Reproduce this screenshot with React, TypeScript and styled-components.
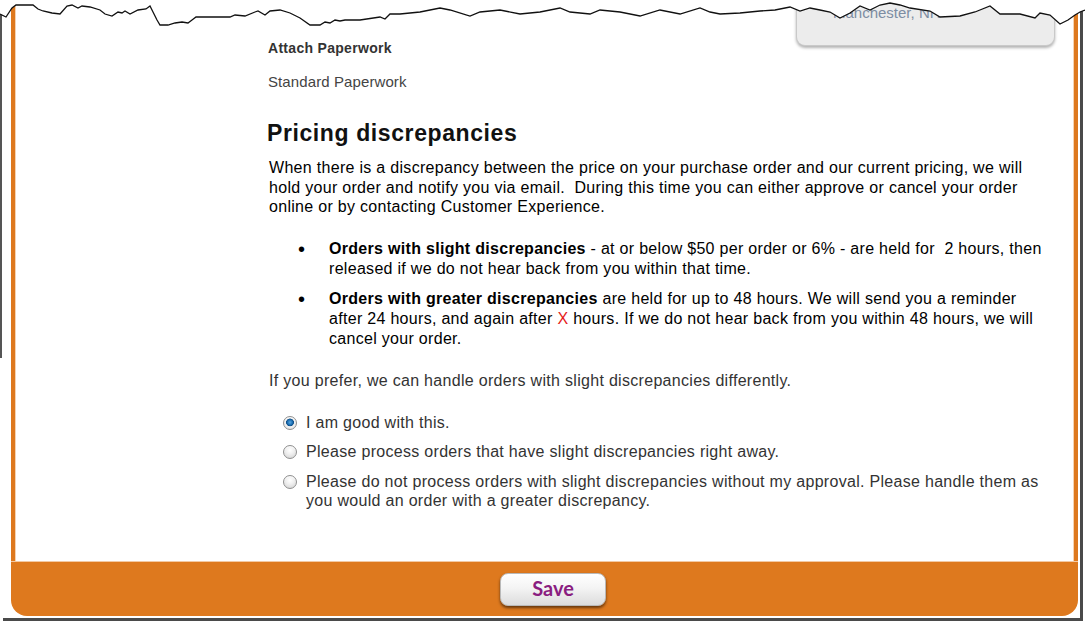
import React from 'react';
import styled, {createGlobalStyle} from 'styled-components';

// ── Global ─────────────────────────────────────────────────────────

const GlobalStyle = createGlobalStyle`
  html, body {
    margin: 0;
    padding: 0;
    background: #ffffff;
  }
  body {
    font-family: 'Liberation Sans', Arial, sans-serif;
    width: 1085px;
    height: 623px;
    overflow: hidden;
  }
`;

const ORANGE = '#de791e';

// ── Sheet & frame ──────────────────────────────────────────────────

const Sheet = styled.div`
  position: relative;
  width: 1080px;
  height: 618px;
  background: #ffffff;
  box-shadow: 3px 3px 0 #4a4a4a;

  &::before {
    content: '';
    position: absolute;
    left: 0;
    top: 0;
    width: 2px;
    height: 358px;
    background: #555;
  }
`;

const Frame = styled.div`
  display: flex;
  flex-direction: column;
  margin-left: 11px;
  width: 1067px;
  height: 616px;
`;

const Body = styled.div`
  flex: 1;
  display: flex;
  flex-direction: column;
  background: #ffffff;
  border-left: 4px solid ${ORANGE};
  border-right: 4px solid ${ORANGE};
  padding: 0 10px 0 253px;
  box-shadow: inset 1px 0 0 #f6d3b2, inset -1px 0 0 #f6d3b2;
`;

const Footer = styled.div`
  height: 55px;
  display: flex;
  align-items: center;
  justify-content: center;
  padding-left: 17px;
  background: ${ORANGE};
  border-radius: 0 0 16px 16px;
  border-top: 1px solid #f3c9a3;
  box-sizing: border-box;
`;

const SaveButton = styled.button`
  width: 106px;
  height: 33px;
  border: 1px solid #b9b9b9;
  border-radius: 8px;
  background: linear-gradient(#ffffff 0%, #f4f4f4 45%, #dcdcdc 100%);
  box-shadow: 0 2px 3px rgba(0, 0, 0, 0.55);
  font-family: Lato, 'Open Sans', sans-serif;
  font-weight: 700;
  font-size: 20px;
  color: #8a1d80;
  cursor: pointer;
  padding: 0 0 2px;
`;

// ── Torn top edge (drawn over the top of the sheet) ────────────────

const TornEdge = styled.svg`
  position: absolute;
  left: 0;
  top: 0;
  width: 1085px;
  height: 32px;
`;

const tornPoints: [number, number][] = [
  [0, 14], [6, 17], [12, 8], [16, 5], [33, 5], [38, 9], [43, 11], [52, 13],
  [60, 14], [67, 6], [72, 5], [78, 8], [82, 6], [90, 7], [100, 10], [105, 14],
  [112, 16], [118, 12], [122, 13], [125, 11], [130, 14], [138, 10], [146, 9],
  [150, 6], [153, 12], [157, 20], [160, 25], [168, 25], [175, 23], [182, 22],
  [188, 23], [192, 20], [196, 17], [210, 17], [230, 17], [235, 15], [245, 16],
  [255, 12], [258, 11], [265, 15], [270, 11], [280, 10], [290, 13], [300, 18],
  [310, 25], [320, 25], [325, 22], [330, 23], [335, 20], [340, 21], [345, 20],
  [360, 20], [380, 17], [385, 19], [390, 14], [400, 14], [420, 12], [440, 8],
  [450, 10], [470, 16], [480, 12], [500, 10], [520, 14], [540, 12], [560, 8],
  [570, 12], [590, 14], [600, 10], [620, 12], [640, 16], [660, 10], [680, 14],
  [700, 8], [710, 12], [720, 14], [740, 13], [760, 11], [775, 10], [790, 7],
  [800, 11], [810, 8], [820, 10], [830, 12], [840, 18], [850, 13], [860, 6],
  [870, 10], [880, 5], [890, 3], [900, 5], [910, 8], [930, 11], [940, 17],
  [960, 16], [975, 12], [990, 6], [1000, 14], [1020, 14], [1035, 18],
  [1040, 13], [1050, 15], [1060, 24], [1068, 20], [1075, 15], [1080, 12],
  [1085, 10],
];

const Torn = () => {
  const line = tornPoints.map(([x, y]) => `${x},${y}`).join(' ');
  return (
    <TornEdge viewBox="0 0 1085 32">
      <polygon points={`0,0 ${line} 1085,0`} fill="#ffffff" />
      <polyline points={line} fill="none" stroke="#111" strokeWidth="1.3" />
    </TornEdge>
  );
};

// ── Header area ────────────────────────────────────────────────────

const HeaderRow = styled.div`
  display: flex;
  justify-content: space-between;
  align-items: flex-start;
  margin-right: 16px;
`;

const HeaderText = styled.div`
  display: flex;
  flex-direction: column;
  padding-top: 40px;
`;

const SectionLabel = styled.div`
  font-size: 14px;
  line-height: 16px;
  letter-spacing: 0.3px;
  font-weight: 700;
  color: #333;
`;

const SectionValue = styled.div`
  margin-top: 18px;
  font-size: 15px;
  line-height: 16px;
  letter-spacing: 0.1px;
  color: #444;
`;

const AddressBox = styled.div`
  width: 259px;
  height: 46px;
  margin-right: -7px;
  box-sizing: border-box;
  padding: 4px 0 0 36px;
  background: #ececec;
  border: 1px solid #c9c9c9;
  border-top: none;
  border-radius: 0 0 9px 9px;
  box-shadow: 0 2px 3px rgba(0, 0, 0, 0.3);
  font-size: 15px;
  color: #7d8da3;
`;

// ── Pricing section ────────────────────────────────────────────────

const Heading = styled.h2`
  margin: 31px 0 0 -1px;
  font-size: 23px;
  line-height: 24px;
  letter-spacing: 0.6px;
  font-weight: 700;
  color: #111;
`;

const Paragraph = styled.p`
  margin: 13px 0 0 1px;
  font-size: 16px;
  line-height: 19.5px;
  letter-spacing: 0.3px;
  color: #000;
`;

const BulletList = styled.ul`
  margin: 22px 0 0 1px;
  padding: 0;
  list-style: none;
  display: flex;
  flex-direction: column;
  gap: 10px;
`;

const BulletItem = styled.li`
  display: flex;
  font-size: 16px;
  line-height: 20px;
  letter-spacing: 0.3px;
  color: #000;
`;

const BulletMark = styled.span`
  flex: 0 0 60px;
  padding-left: 29px;
  box-sizing: border-box;
  font-size: 20px;
  line-height: 20px;
`;

const RedX = styled.span`
  color: #e51b1b;
`;

const Prefer = styled.p`
  margin: 22px 0 0 1px;
  font-size: 16px;
  line-height: 20px;
  letter-spacing: 0.3px;
  color: #333;
`;

const RadioGroup = styled.div`
  margin-top: 22px;
  padding-left: 15px;
  display: flex;
  flex-direction: column;
  gap: 10px;
`;

const RadioRow = styled.label`
  display: flex;
  align-items: flex-start;
  gap: 9px;
  font-size: 16px;
  line-height: 19.5px;
  letter-spacing: 0.3px;
  color: #333;
`;

const RadioDot = styled.span<{$checked?: boolean}>`
  flex: 0 0 14px;
  width: 14px;
  height: 14px;
  margin-top: 3px;
  box-sizing: border-box;
  border-radius: 50%;
  border: 1px solid #8f8f8f;
  background: ${p =>
    p.$checked
      ? 'radial-gradient(circle at 50% 45%, #5aa7e0 0, #1c6fb3 2.5px, #0d4d86 3.6px, #f2f2f2 4.2px, #d8d8d8 100%)'
      : 'radial-gradient(circle at 50% 35%, #ffffff 0, #f0f0f0 40%, #cfcfcf 100%)'};
  box-shadow: inset 0 1px 1px rgba(255, 255, 255, 0.8);
`;

// ── App ────────────────────────────────────────────────────────────

export default function App() {
  return (
    <>
      <GlobalStyle />
      <Sheet>
        <Frame>
          <Body>
            <HeaderRow>
              <HeaderText>
                <SectionLabel>Attach Paperwork</SectionLabel>
                <SectionValue>Standard Paperwork</SectionValue>
              </HeaderText>
              <AddressBox>Manchester, NH</AddressBox>
            </HeaderRow>

            <Heading>Pricing discrepancies</Heading>
            <Paragraph>
              When there is a discrepancy between the price on your purchase
              order and our current pricing, we will
              <br />
              hold your order and notify you via email.&nbsp; During this time
              you can either approve or cancel your order
              <br />
              online or by contacting Customer Experience.
            </Paragraph>

            <BulletList>
              <BulletItem>
                <BulletMark>•</BulletMark>
                <span>
                  <b>Orders with slight discrepancies</b> - at or below $50 per
                  order or 6% - are held for&nbsp; 2 hours, then
                  <br />
                  released if we do not hear back from you within that time.
                </span>
              </BulletItem>
              <BulletItem>
                <BulletMark>•</BulletMark>
                <span>
                  <b>Orders with greater discrepancies</b> are held for up to 48
                  hours. We will send you a reminder
                  <br />
                  after 24 hours, and again after <RedX>X</RedX> hours. If we do
                  not hear back from you within 48 hours, we will
                  <br />
                  cancel your order.
                </span>
              </BulletItem>
            </BulletList>

            <Prefer>
              If you prefer, we can handle orders with slight discrepancies
              differently.
            </Prefer>

            <RadioGroup>
              <RadioRow>
                <RadioDot $checked />
                <span>I am good with this.</span>
              </RadioRow>
              <RadioRow>
                <RadioDot />
                <span>
                  Please process orders that have slight discrepancies right
                  away.
                </span>
              </RadioRow>
              <RadioRow>
                <RadioDot />
                <span>
                  Please do not process orders with slight discrepancies without
                  my approval. Please handle them as
                  <br />
                  you would an order with a greater discrepancy.
                </span>
              </RadioRow>
            </RadioGroup>
          </Body>
          <Footer>
            <SaveButton>Save</SaveButton>
          </Footer>
        </Frame>
        <Torn />
      </Sheet>
    </>
  );
}
